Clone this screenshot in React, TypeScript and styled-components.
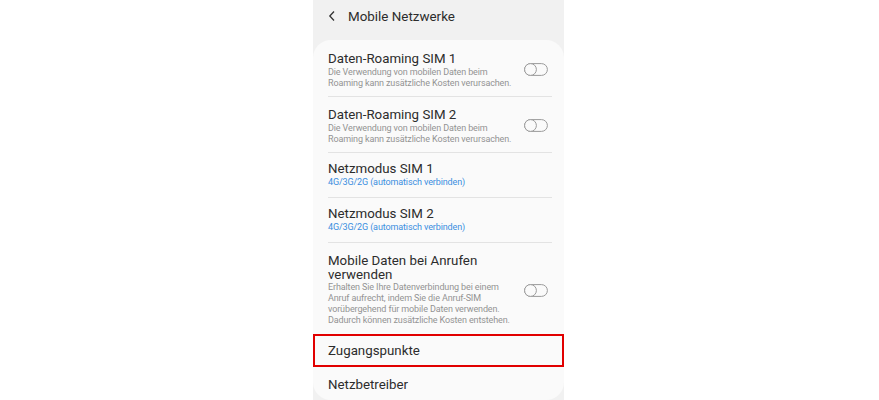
import React from "react";
import styled, { createGlobalStyle } from "styled-components";

const Global = createGlobalStyle`
  html, body { margin: 0; padding: 0; background: #ffffff; }
  body { font-family: Roboto, "Noto Sans", "Liberation Sans", sans-serif; }
`;

const Page = styled.div`
  width: 879px;
  height: 400px;
  overflow: hidden;
  display: flex;
  justify-content: flex-start;
`;

const Screen = styled.div`
  margin-left: 313px;
  width: 251px;
  height: 400px;
  background: #f1f1f1;
  display: flex;
  flex-direction: column;
`;

const Header = styled.div`
  height: 40px;
  flex: none;
  display: flex;
  align-items: center;
  padding: 0 0 8px 15px;
  box-sizing: border-box;
  gap: 12px;
`;

const HeaderTitle = styled.div`
  font-size: 13.4px;
  color: #2c2c2c;
`;

const Card = styled.div`
  background: #fafafa;
  border-radius: 18px;
  display: flex;
  flex-direction: column;
  flex: 1;
  overflow: hidden;
`;

const Row = styled.div<{ $boxed?: boolean }>`
  padding: 0 12px 0 15px;
  display: flex;
  flex: none;
  ${(p) => (p.$boxed ? "outline: 2px solid #e10000; outline-offset: -2px;" : "")}
`;

const RowInner = styled.div<{ $pt: number; $pb: number; $divider: boolean }>`
  flex: 1;
  display: flex;
  align-items: center;
  padding: ${(p) => p.$pt}px 0 ${(p) => p.$pb}px;
  border-bottom: ${(p) => (p.$divider ? "1px solid #e3e3e3" : "none")};
`;

const Texts = styled.div`
  flex: 1;
  display: flex;
  flex-direction: column;
`;

const Title = styled.div<{ $lh: number }>`
  font-size: 13.3px;
  line-height: ${(p) => p.$lh}px;
  color: #2c2c2c;
  white-space: nowrap;
`;

const Sub = styled.div<{ $blue?: boolean }>`
  font-size: 9px;
  letter-spacing: -0.12px;
  line-height: 11px;
  white-space: nowrap;
  color: ${(p) => (p.$blue ? "#3a8ee0" : "#939393")};
`;

const ToggleWrap = styled.div`
  width: 24px;
  height: 13px;
  margin: 0 4px 0 6px;
  display: flex;
  flex: none;
`;

const Toggle = () => (
  <ToggleWrap>
    <svg width="24" height="13" viewBox="0 0 24 13">
      <rect x="0.6" y="0.6" width="22.8" height="11.8" rx="5.9" fill="none" stroke="#9a9a9a" strokeWidth="1" />
      <circle cx="6.5" cy="6.5" r="5.9" fill="#fafafa" stroke="#9a9a9a" strokeWidth="1" />
    </svg>
  </ToggleWrap>
);

const Chevron = () => (
  <svg width="8" height="12" viewBox="0 0 8 12">
    <path d="M6 1.5 L1.8 6 L6 10.5" fill="none" stroke="#333" strokeWidth="1.3" />
  </svg>
);

type Item = {
  title: string[];
  sub?: string[];
  blue?: boolean;
  toggle?: boolean;
  pt: number;
  pb: number;
  lh: number;
  boxed?: boolean;
  divider: boolean;
};

const items: Item[] = [
  {
    title: ["Daten-Roaming SIM 1"],
    sub: ["Die Verwendung von mobilen Daten beim", "Roaming kann zusätzliche Kosten verursachen."],
    toggle: true,
    pt: 10,
    pb: 7,
    lh: 17,
    divider: true,
  },
  {
    title: ["Daten-Roaming SIM 2"],
    sub: ["Die Verwendung von mobilen Daten beim", "Roaming kann zusätzliche Kosten verursachen."],
    toggle: true,
    pt: 9,
    pb: 7,
    lh: 17,
    divider: true,
  },
  {
    title: ["Netzmodus SIM 1"],
    sub: ["4G/3G/2G (automatisch verbinden)"],
    blue: true,
    pt: 7,
    pb: 9,
    lh: 17,
    divider: true,
  },
  {
    title: ["Netzmodus SIM 2"],
    sub: ["4G/3G/2G (automatisch verbinden)"],
    blue: true,
    pt: 7,
    pb: 9,
    lh: 17,
    divider: true,
  },
  {
    title: ["Mobile Daten bei Anrufen", "verwenden"],
    sub: [
      "Erhalten Sie Ihre Datenverbindung bei einem",
      "Anruf aufrecht, indem Sie die Anruf-SIM",
      "vorübergehend für mobile Daten verwenden.",
      "Dadurch können zusätzliche Kosten entstehen.",
    ],
    toggle: true,
    pt: 11,
    pb: 8,
    lh: 14,
    divider: false,
  },
  { title: ["Zugangspunkte"], pt: 7, pb: 7, lh: 19, boxed: true, divider: false },
  { title: ["Netzbetreiber"], pt: 8, pb: 7, lh: 19, divider: false },
];

export default function App() {
  return (
    <>
      <Global />
      <Page>
        <Screen>
          <Header>
            <Chevron />
            <HeaderTitle>Mobile Netzwerke</HeaderTitle>
          </Header>
          <Card>
            {items.map((it, i) => (
              <Row key={i} $boxed={it.boxed}>
                <RowInner $pt={it.pt} $pb={it.pb} $divider={it.divider}>
                  <Texts>
                    {it.title.map((t) => (
                      <Title key={t} $lh={it.lh}>
                        {t}
                      </Title>
                    ))}
                    {it.sub?.map((s) => (
                      <Sub key={s} $blue={it.blue}>
                        {s}
                      </Sub>
                    ))}
                  </Texts>
                  {it.toggle && <Toggle />}
                </RowInner>
              </Row>
            ))}
          </Card>
        </Screen>
      </Page>
    </>
  );
}
